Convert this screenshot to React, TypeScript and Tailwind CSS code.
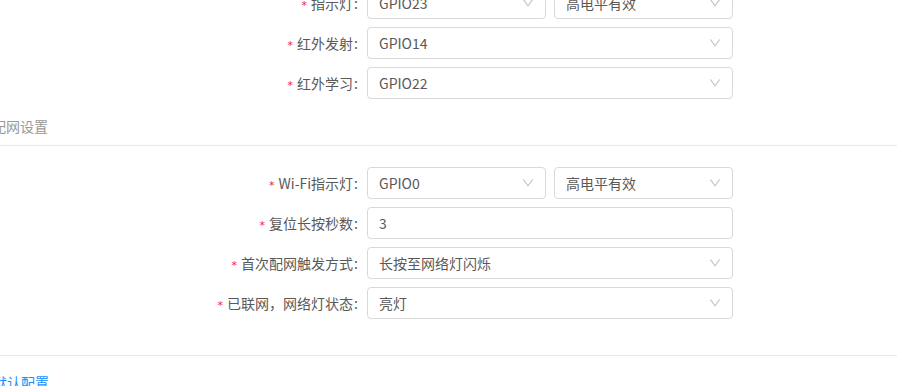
const FONT = "font-['Noto_Sans_CJK_SC','Noto_Sans',sans-serif]";

const Chevron = () => (
  <svg viewBox="64 64 896 896" className="w-[12px] h-[12px] fill-[#bfbfbf]">
    <path d="M884 256h-75c-5.1 0-9.9 2.5-12.9 6.6L512 654.2 227.9 262.6c-3-4.1-7.8-6.6-12.9-6.6h-75c-6.5 0-10.3 7.4-6.5 12.7l352.6 486.1c12.8 17.6 39 17.6 51.7 0l352.6-486.1c3.9-5.3.1-12.7-6.4-12.7z" />
  </svg>
);

const Select = ({ value, arrow = true }: { value: string; arrow?: boolean }) => (
  <div className="flex-1 h-[32px] flex items-center justify-between border border-[#d9d9d9] rounded-[4px] bg-white pl-[11px] pr-[11px] text-[14px] text-[#595959]">
    <span>{value}</span>
    {arrow && <Chevron />}
  </div>
);

const Row = ({ label, children }: { label: string; children: React.ReactNode }) => (
  <div className="flex h-[32px] mb-[8px]">
    <div className="w-[367px] shrink-0 flex items-center justify-end text-[14px] text-[#595959]">
      <span className="mr-[4px] text-[#f5222d] font-['DejaVu_Sans',sans-serif] text-[11px] leading-none relative top-[2px]">*</span>
      <span>{label}</span>
      <span className="ml-[1px] mr-[9px]">:</span>
    </div>
    <div className="w-[366px] flex gap-[8px]">{children}</div>
  </div>
);

export default function App() {
  return (
    <div className={`w-[897px] h-[386px] overflow-hidden bg-white ${FONT}`}>
      <div className="-mt-[13px] flex flex-col">
        <Row label="指示灯">
          <Select value="GPIO23" />
          <Select value="高电平有效" />
        </Row>
        <Row label="红外发射">
          <Select value="GPIO14" />
        </Row>
        <Row label="红外学习">
          <Select value="GPIO22" />
        </Row>

        {/* 配网设置 */}
        <div className="h-[39px] border-b border-[#e8e8e8] flex items-center">
          <span className="-ml-[8px] text-[14px] text-[#999999]">配网设置</span>
        </div>
        <div className="mt-[21px] flex flex-col">
          <Row label="Wi-Fi指示灯">
            <Select value="GPIO0" />
            <Select value="高电平有效" />
          </Row>
          <Row label="复位长按秒数">
            <Select value="3" arrow={false} />
          </Row>
          <Row label="首次配网触发方式">
            <Select value="长按至网络灯闪烁" />
          </Row>
          <Row label="已联网，网络灯状态">
            <Select value="亮灯" />
          </Row>
        </div>

        <div className="mt-[28px] h-px bg-[#e8e8e8]" />
        <div className="mt-[15px] h-[22px] flex items-center">
          <span className="-ml-[7px] text-[14px] text-[#1890ff]">默认配置</span>
        </div>
      </div>
    </div>
  );
}
